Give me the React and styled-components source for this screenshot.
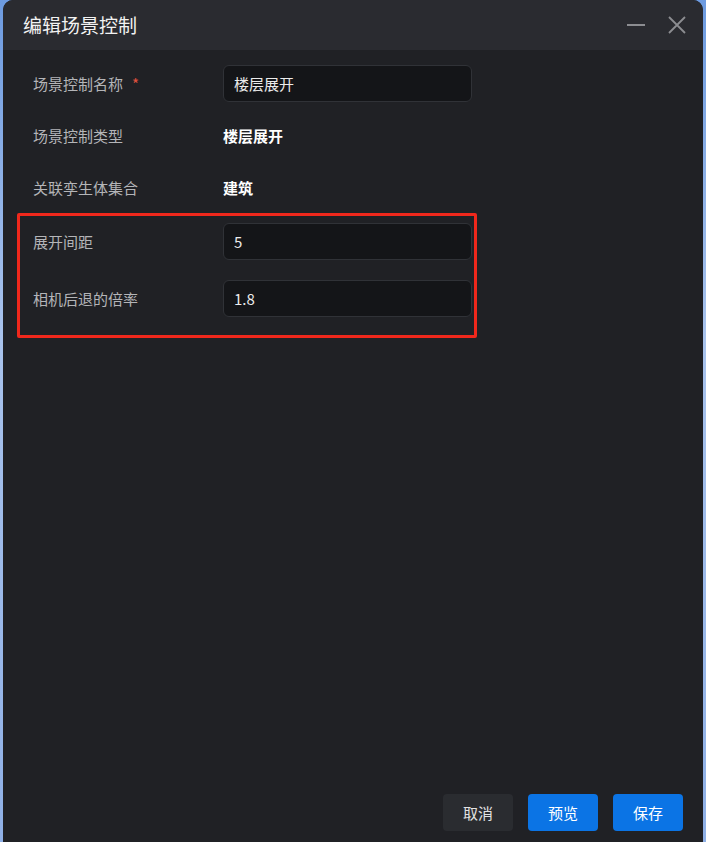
import React from "react";
import styled, { createGlobalStyle } from "styled-components";

const Global = createGlobalStyle`
  html, body { margin: 0; padding: 0; height: 100%; }
  body {
    background: linear-gradient(180deg, #6d9be0 0%, #a9c3ec 40%, #8fb0e6 100%);
    font-family: "Noto Sans CJK SC", "Noto Sans", sans-serif;
    overflow: hidden;
  }
  #root { height: 100%; }
`;

const Screen = styled.div`
  height: 842px;
  padding: 0 3px;
  display: flex;
`;

const Dialog = styled.div`
  flex: 1;
  display: flex;
  flex-direction: column;
  background: #202125;
  border-radius: 10px 10px 0 0;
  overflow: hidden;
`;

const Header = styled.div`
  height: 50px;
  flex: none;
  display: flex;
  align-items: center;
  padding: 0 14px 0 20px;
  background: #2a2b30;
`;

const Title = styled.div`
  flex: 1;
  color: #f2f2f2;
  font-size: 19px;
  line-height: 24px;
`;

const IconButton = styled.button`
  width: 24px;
  height: 24px;
  padding: 0;
  margin-left: ${(p) => p.$gap || 0}px;
  border: none;
  background: transparent;
  display: flex;
  align-items: center;
  justify-content: center;
  cursor: pointer;
`;

const Body = styled.div`
  flex: 1;
  display: flex;
  flex-direction: column;
  padding: 15px 0 0 30px;
`;

const Row = styled.div`
  display: grid;
  grid-template-columns: 190px 249px;
  align-items: center;
  height: 37px;
  margin-top: ${(p) => p.$top || 0}px;
`;

const Label = styled.div`
  color: #b4b5b8;
  font-size: 15px;
  display: flex;
  align-items: center;
`;

const Required = styled.span`
  color: #e0513e;
  margin-left: 9px;
  font-size: 15px;
`;

const Value = styled.div`
  color: #ffffff;
  font-size: 15px;
  font-weight: 600;
`;

const Input = styled.input`
  box-sizing: border-box;
  width: 249px;
  height: 37px;
  padding: 0 10px;
  background: #141518;
  border: 1px solid #303237;
  border-radius: 6px;
  color: #ececec;
  font-family: "Noto Sans CJK SC", "Noto Sans", sans-serif;
  font-size: 15px;
  outline: none;
`;

const Highlight = styled.div`
  width: 460px;
  box-sizing: border-box;
  margin: 7px 0 0 -16px;
  padding: 7px 0 18px 13px;
  border: 3px solid #f0281c;
  border-radius: 2px;
`;

const Footer = styled.div`
  flex: none;
  display: flex;
  justify-content: flex-end;
  gap: 15px;
  padding: 0 20px 11px 0;
`;

const Button = styled.button`
  width: 70px;
  height: 37px;
  border: none;
  border-radius: 4px;
  font-family: "Noto Sans CJK SC", "Noto Sans", sans-serif;
  font-size: 15px;
  color: ${(p) => (p.$primary ? "#ffffff" : "#e2e2e2")};
  background: ${(p) => (p.$primary ? "#0b74e5" : "#2a2c30")};
  cursor: pointer;
`;

export default function App() {
  return (
    <>
      <Global />
      <Screen>
        <Dialog>
          <Header>
            <Title>编辑场景控制</Title>
            <IconButton aria-label="minimize">
              <svg width="20" height="20" viewBox="0 0 20 20">
                <line x1="1" y1="10" x2="19" y2="10" stroke="#8c8d91" strokeWidth="2" />
              </svg>
            </IconButton>
            <IconButton aria-label="close" $gap={17}>
              <svg width="20" height="20" viewBox="0 0 20 20">
                <path d="M2 2 L18 18 M18 2 L2 18" stroke="#8c8d91" strokeWidth="1.8" fill="none" />
              </svg>
            </IconButton>
          </Header>
          <Body>
            <Row>
              <Label>
                场景控制名称<Required>*</Required>
              </Label>
              <Input defaultValue="楼层展开" />
            </Row>
            <Row $top={15}>
              <Label>场景控制类型</Label>
              <Value>楼层展开</Value>
            </Row>
            <Row $top={15}>
              <Label>关联孪生体集合</Label>
              <Value>建筑</Value>
            </Row>
            <Highlight>
              <Row>
                <Label>展开间距</Label>
                <Input defaultValue="5" />
              </Row>
              <Row $top={20}>
                <Label>相机后退的倍率</Label>
                <Input defaultValue="1.8" />
              </Row>
            </Highlight>
          </Body>
          <Footer>
            <Button>取消</Button>
            <Button $primary>预览</Button>
            <Button $primary>保存</Button>
          </Footer>
        </Dialog>
      </Screen>
    </>
  );
}
